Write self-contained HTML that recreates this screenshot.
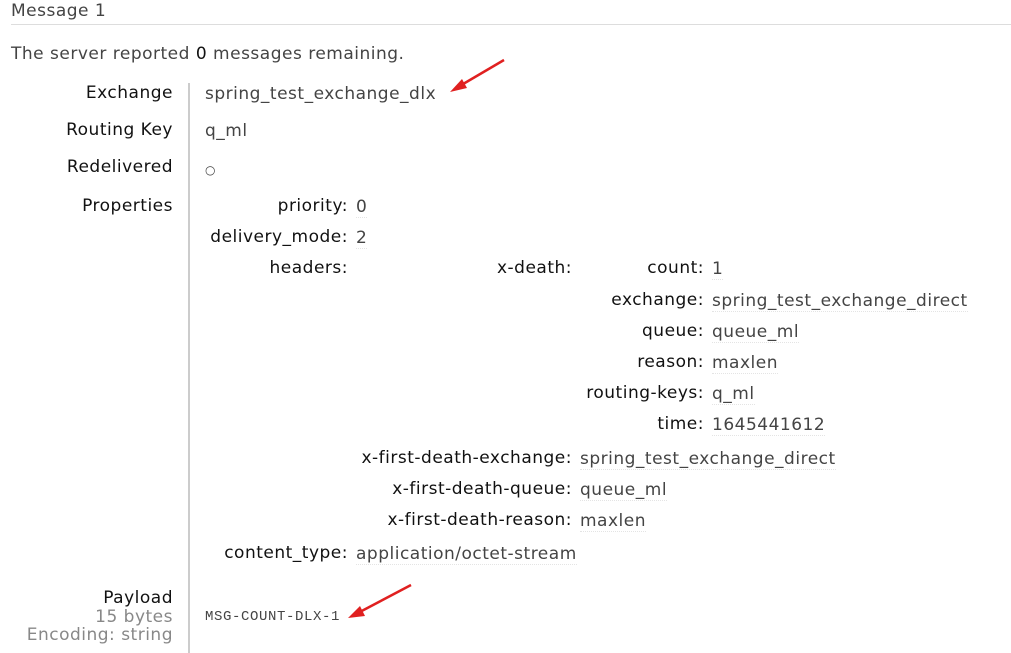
<!DOCTYPE html>
<html><head><meta charset="utf-8"><style>
body{margin:0;width:1011px;height:653px;background:#fff;position:relative;overflow:hidden;font-family:"DejaVu Sans","Liberation Sans",sans-serif;font-size:17px;letter-spacing:0.5px;}
.t{position:absolute;line-height:20px;white-space:nowrap;}
.l{position:absolute;line-height:20px;white-space:nowrap;text-align:right;color:#111;}
.v{position:absolute;line-height:20px;white-space:nowrap;color:#444;border-bottom:1px dotted #e4e4e4;}
</style></head><body>
<div class="t" style="left:11px;top:1px;color:#444;">Message 1</div>
<div style="position:absolute;left:11px;top:24px;width:1000px;height:1px;background:#ddd;"></div>
<div class="t" style="left:11px;top:44px;color:#444;">The server reported <span style="color:#111">0</span> messages remaining.</div>
<div style="position:absolute;left:188px;top:83px;width:2px;height:570px;background:#ccc;"></div>

<div class="l" style="right:838px;top:83px;">Exchange</div>
<div class="l" style="right:838px;top:120px;">Routing Key</div>
<div class="l" style="right:838px;top:157px;">Redelivered</div>
<div class="l" style="right:838px;top:196px;">Properties</div>
<div class="t" style="left:205px;top:84px;color:#444;">spring_test_exchange_dlx</div>
<div class="t" style="left:205px;top:121px;color:#444;">q_ml</div>
<div class="t" style="left:205px;top:160px;color:#444;font-size:12px;">○</div>

<div class="l" style="right:663px;top:196px;">priority:</div>
<div class="v" style="left:356px;top:197px;">0</div>
<div class="l" style="right:663px;top:227px;">delivery_mode:</div>
<div class="v" style="left:356px;top:228px;">2</div>
<div class="l" style="right:663px;top:258px;">headers:</div>

<div class="l" style="right:439px;top:258px;">x-death:</div>
<div class="l" style="right:307px;top:258px;">count:</div>
<div class="v" style="left:712px;top:259px;">1</div>
<div class="l" style="right:307px;top:290px;">exchange:</div>
<div class="v" style="left:712px;top:291px;">spring_test_exchange_direct</div>
<div class="l" style="right:307px;top:321px;">queue:</div>
<div class="v" style="left:712px;top:322px;">queue_ml</div>
<div class="l" style="right:307px;top:352px;">reason:</div>
<div class="v" style="left:712px;top:353px;">maxlen</div>
<div class="l" style="right:307px;top:383px;">routing-keys:</div>
<div class="v" style="left:712px;top:384px;">q_ml</div>
<div class="l" style="right:307px;top:414px;">time:</div>
<div class="v" style="left:712px;top:415px;">1645441612</div>

<div class="l" style="right:439px;top:448px;">x-first-death-exchange:</div>
<div class="v" style="left:580px;top:449px;">spring_test_exchange_direct</div>
<div class="l" style="right:439px;top:479px;">x-first-death-queue:</div>
<div class="v" style="left:580px;top:480px;">queue_ml</div>
<div class="l" style="right:439px;top:510px;">x-first-death-reason:</div>
<div class="v" style="left:580px;top:511px;">maxlen</div>

<div class="l" style="right:663px;top:543px;">content_type:</div>
<div class="v" style="left:356px;top:544px;">application/octet-stream</div>

<div class="l" style="right:838px;top:588px;">Payload</div>
<div class="l" style="right:838px;top:607px;color:#888;">15 bytes</div>
<div class="l" style="right:838px;top:625px;color:#888;">Encoding: string</div>
<div class="t" style="left:205px;top:607px;color:#444;font-family:'Liberation Mono',monospace;font-size:14px;letter-spacing:0.6px;">MSG-COUNT-DLX-1</div>

<svg style="position:absolute;left:0;top:0" width="1011" height="653">
<line x1="504" y1="60" x2="458" y2="87" stroke="#e02020" stroke-width="2.5"/>
<polygon points="450,92 462,79 467,88" fill="#e02020"/>
<line x1="411" y1="585" x2="356" y2="614" stroke="#e02020" stroke-width="2.5"/>
<polygon points="348,618 360,606 365,616" fill="#e02020"/>
</svg>
</body></html>
